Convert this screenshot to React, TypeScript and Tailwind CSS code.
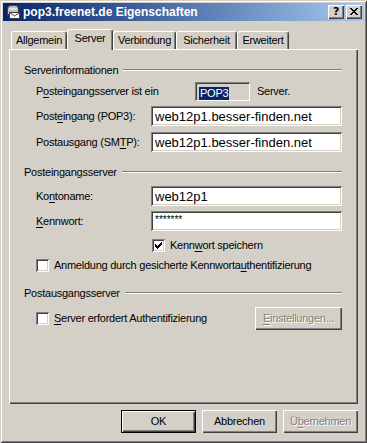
import React from "react";

const raised =
  "shadow-[inset_1px_1px_#fff,inset_-1px_-1px_#404040,inset_-2px_-2px_#808080]";
const sunken =
  "shadow-[inset_1px_1px_#808080,inset_-1px_-1px_#fff,inset_2px_2px_#404040,inset_-2px_-2px_#d4d0c8]";
const disabledText = "text-[#808080] [text-shadow:1px_1px_0_#fff]";

function U({ children }: { children: React.ReactNode }) {
  return <span className="underline underline-offset-[2px]">{children}</span>;
}

function CheckBox({ checked }: { checked?: boolean }) {
  return (
    <div className={`w-[13px] h-[13px] bg-white shrink-0 flex items-center justify-center ${sunken}`}>
      {checked && (
        <svg width="7" height="7" viewBox="0 0 7 7" shapeRendering="crispEdges">
          <rect x="6" y="0" width="1" height="1" fill="#000" />
          <rect x="5" y="1" width="2" height="1" fill="#000" />
          <rect x="0" y="2" width="1" height="1" fill="#000" />
          <rect x="4" y="2" width="3" height="1" fill="#000" />
          <rect x="0" y="3" width="2" height="1" fill="#000" />
          <rect x="3" y="3" width="3" height="1" fill="#000" />
          <rect x="0" y="4" width="5" height="1" fill="#000" />
          <rect x="1" y="5" width="3" height="1" fill="#000" />
          <rect x="2" y="6" width="1" height="1" fill="#000" />
        </svg>
      )}
    </div>
  );
}

function GroupHeader({ title }: { title: string }) {
  return (
    <div className="flex items-center h-[14px]">
      <span className="leading-[14px]">{title}</span>
      <div className="flex-1 ml-[5px] h-[2px] border-t border-t-[#808080] border-b border-b-white" />
    </div>
  );
}

function Field({ label, value, password }: { label: React.ReactNode; value: string; password?: boolean }) {
  return (
    <div className="flex items-center h-[20px] pl-[12px]">
      <span className="w-[115px] leading-[13px]">{label}</span>
      <div className={`flex-1 h-[20px] bg-white pl-[4px] tracking-normal ${sunken}`}>
        {password ? (
          <div className="text-[10px] leading-[10px] pt-[4px]">{value}</div>
        ) : (
          <div className="text-[13px] leading-[14px] pt-[4px]">{value}</div>
        )}
      </div>
    </div>
  );
}

function Tab({ label, selected, width }: { label: string; selected?: boolean; width: string }) {
  return (
    <div
      className={`${width} flex justify-center border-l border-t border-white border-r border-r-[#404040] rounded-t-[3px] bg-[#d4d0c8] shadow-[inset_-1px_0_#808080] ${
        selected ? "h-[21px] -mb-[1px] relative z-10 pt-[2px]" : "h-[18px] pt-[2px]"
      }`}
    >
      <span className="leading-[13px]">{label}</span>
    </div>
  );
}

export default function App() {
  return (
    <div
      className={`w-[367px] h-[443px] bg-[#d4d0c8] p-[3px] text-[11px] tracking-[-0.25px] text-black font-['Liberation_Sans',Arial,sans-serif] shadow-[inset_1px_1px_#d4d0c8,inset_-1px_-1px_#404040,inset_2px_2px_#fff,inset_-2px_-2px_#808080]`}
    >
      {/* title bar */}
      <div className="h-[18px] flex items-center bg-linear-to-r from-[#0a246a] to-[#a6caf0]">
        <svg className="ml-[2px]" width="16" height="16" viewBox="0 0 16 16">
          <path d="M2.5 10.5 V5 Q2.5 1.5 6 1.5 H10.5 Q13.5 1.5 13.5 5 V10.5 Z" fill="#c0c0c0" stroke="#404040" />
          <path d="M4 5 H12" stroke="#fff" />
          <rect x="4.5" y="8.5" width="10" height="6" fill="#fff" stroke="#404040" />
          <path d="M4.5 8.5 L9.5 12 L14.5 8.5" fill="none" stroke="#404040" />
        </svg>
        <span className="ml-[2px] text-white font-bold text-[12px] leading-[14px] tracking-normal">
          pop3.freenet.de Eigenschaften
        </span>
        <div className="ml-auto mr-[2px] flex gap-[2px]">
          <div className={`w-[16px] h-[14px] bg-[#d4d0c8] flex items-center justify-center ${raised}`}>
            <span className="font-bold text-[11px] leading-[11px] font-['DejaVu_Sans',sans-serif] -mt-[1px]">?</span>
          </div>
          <div className={`w-[16px] h-[14px] bg-[#d4d0c8] flex items-center justify-center ${raised}`}>
            <svg width="8" height="7" viewBox="0 0 8 7" shapeRendering="crispEdges" className="-mt-[1px]">
              <rect x="0" y="0" width="2" height="1" />
              <rect x="6" y="0" width="2" height="1" />
              <rect x="1" y="1" width="2" height="1" />
              <rect x="5" y="1" width="2" height="1" />
              <rect x="2" y="2" width="4" height="1" />
              <rect x="3" y="3" width="2" height="1" />
              <rect x="2" y="4" width="4" height="1" />
              <rect x="1" y="5" width="2" height="1" />
              <rect x="5" y="5" width="2" height="1" />
              <rect x="0" y="6" width="2" height="1" />
              <rect x="6" y="6" width="2" height="1" />
            </svg>
          </div>
        </div>
      </div>

      <div className="mx-[6px] mt-[8px]">
        {/* tabs */}
        <div className="h-[20px] flex items-end pl-[2px]">
          <Tab label="Allgemein" width="w-[56px]" />
          <Tab label="Server" width="w-[46px]" selected />
          <Tab label="Verbindung" width="w-[63px]" />
          <Tab label="Sicherheit" width="w-[61px]" />
          <Tab label="Erweitert" width="w-[52px]" />
        </div>

        {/* panel */}
        <div className="h-[355px] pl-[15px] pr-[16px] pt-[14px] shadow-[inset_1px_1px_#fff,inset_-1px_-1px_#404040,inset_-2px_-2px_#808080]">
          <GroupHeader title="Serverinformationen" />

          <div className="mt-[5px] h-[19px] flex items-center pl-[12px]">
            <span className="w-[159px] leading-[13px]">
              P<U>o</U>steingangsserver ist ein
            </span>
            <div className={`w-[55px] h-[19px] bg-[#d4d0c8] pl-[4px] pt-[3px] ${sunken}`}>
              <span className="bg-[#0a246a] text-white leading-[13px] inline-block px-[1px]">POP3</span>
            </div>
            <span className="ml-[7px] leading-[13px]">Server.</span>
          </div>

          <div className="mt-[5px]">
            <Field
              label={<>Post<U>e</U>ingang (POP3):</>}
              value="web12p1.besser-finden.net"
            />
          </div>
          <div className="mt-[6px]">
            <Field
              label={<>Postausgang (SM<U>T</U>P):</>}
              value="web12p1.besser-finden.net"
            />
          </div>

          <div className="mt-[13px]">
            <GroupHeader title="Posteingangsserver" />
          </div>

          <div className="mt-[7px]">
            <Field label={<>Ko<U>n</U>toname:</>} value="web12p1" />
          </div>
          <div className="mt-[5px]">
            <Field label={<><U>K</U>ennwort:</>} value="*******" password />
          </div>

          <div className="mt-[8px] h-[13px] flex items-center pl-[128px]">
            <CheckBox checked />
            <span className="ml-[5px] leading-[13px]">
              Kenn<U>w</U>ort speichern
            </span>
          </div>

          <div className="mt-[7px] h-[13px] flex items-center pl-[12px]">
            <CheckBox />
            <span className="ml-[5px] leading-[13px]">
              Anmeldung durch gesicherte Kennworta<U>u</U>thentifizierung
            </span>
          </div>

          <div className="mt-[14px]">
            <GroupHeader title="Postausgangsserver" />
          </div>

          <div className="mt-[7px] h-[23px] flex items-center pl-[12px]">
            <CheckBox />
            <span className="ml-[5px] leading-[13px]">
              <U>S</U>erver erfordert Authentifizierung
            </span>
            <div className={`ml-auto w-[87px] h-[23px] flex items-center justify-center bg-[#d4d0c8] ${raised}`}>
              <span className={`leading-[13px] ${disabledText}`}>
                <U>E</U>instellungen...
              </span>
            </div>
          </div>
        </div>
      </div>

      {/* dialog buttons */}
      <div className="mt-[6px] mr-[6px] flex justify-end gap-[6px]">
        <div className="w-[75px] h-[23px] border border-black bg-[#d4d0c8]">
          <div className={`w-full h-full flex items-center justify-center ${raised}`}>
            <span className="leading-[13px]">OK</span>
          </div>
        </div>
        <div className={`w-[75px] h-[23px] flex items-center justify-center bg-[#d4d0c8] ${raised}`}>
          <span className="leading-[13px]">Abbrechen</span>
        </div>
        <div className={`w-[75px] h-[23px] flex items-center justify-center bg-[#d4d0c8] ${raised}`}>
          <span className={`leading-[13px] ${disabledText}`}>
            Ü<U>b</U>ernehmen
          </span>
        </div>
      </div>
    </div>
  );
}
